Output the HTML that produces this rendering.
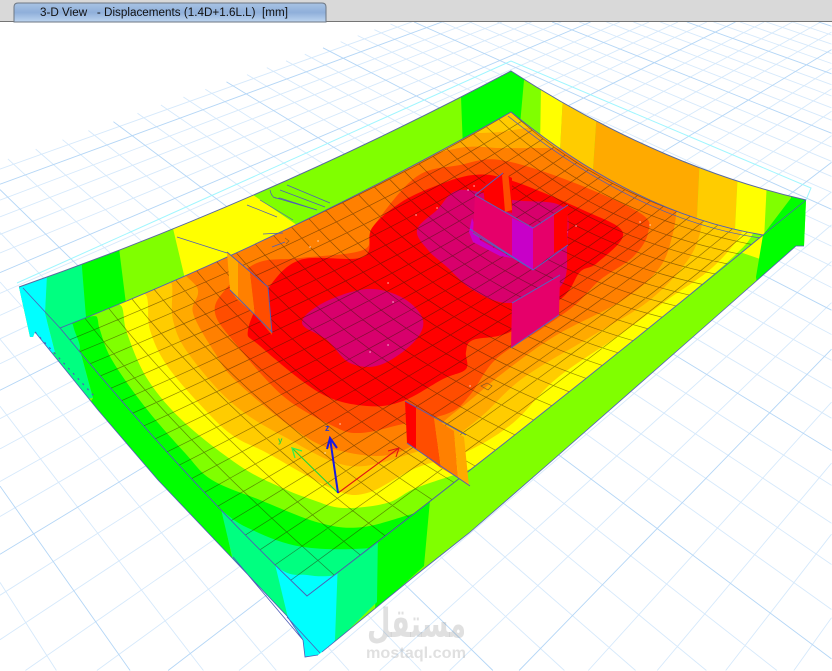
<!DOCTYPE html>
<html>
<head>
<meta charset="utf-8">
<style>
html,body{margin:0;padding:0;background:#fff;width:832px;height:671px;overflow:hidden}
svg{display:block}
</style>
</head>
<body>
<svg xmlns="http://www.w3.org/2000/svg" width="832" height="671" viewBox="0 0 832 671">
<defs>
<linearGradient id="tabg" x1="0" y1="0" x2="0" y2="1">
<stop offset="0" stop-color="#a8c3e4"/>
<stop offset=".5" stop-color="#8fafda"/>
<stop offset="1" stop-color="#bdd5f0"/>
</linearGradient>
<clipPath id="sil"><path d="M19 287Q265 201 511 71Q658.5 166.5 806 200L804 246L796 246L694 336L554 459L469 533L416 575L322 652L318 655L305 657L303 640L287 616L233 559L158 480L98 410L35 332L33 337L30 337Z"/></clipPath>
<clipPath id="slabClip"><path d="M60 328Q284.5 240 511 112Q637 214.5 763 235Q535 422.5 307 596Q183.5 478 60 328Z"/></clipPath>
<clipPath id="view"><rect x="0" y="22" width="832" height="649"/></clipPath>
</defs>
<rect width="832" height="671" fill="#fff"/>
<g clip-path="url(#view)" fill="none">
<path id="gminor" stroke="#d6e9fb" stroke-width=".9"/>
<path id="gmajor" stroke="#b4d6f6" stroke-width=".9"/>
<path d="M17 283L511 61L811 188L806 200" stroke="#9ff6ff" stroke-width="1"/>
</g>

<g clip-path="url(#sil)">
<rect x="0" y="40" width="832" height="631" fill="#80ff00"/>
<polygon fill="#00ffff" points="10,270 47,270 45,313 60,330 19,300"/>
<polygon fill="#00ff80" points="47,270 81,255 87,325 60,335 45,313"/>
<polygon fill="#00ff00" points="81,255 118,240 128,320 87,330"/>
<polygon fill="#ffff00" points="171,220 240,186 310,234 190,300"/>
<polygon fill="#00ff00" points="460,70 515,55 524,80 520,125 463,150"/>
<polygon fill="#ffff00" points="541,85 563,95 559,170 540,150"/>
<polygon fill="#ffcc00" points="563,95 597,110 591,200 559,170"/>
<polygon fill="#ffaa00" points="597,110 700,155 696,240 591,200"/>
<polygon fill="#ffcc00" points="700,155 738,170 734,250 696,240"/>
<polygon fill="#ffff00" points="738,170 767,180 763,260 734,250"/>
<polygon fill="#00ff00" points="791,190 815,190 815,260 757,285 756,277 763,235 791,198"/>
<polygon fill="#00ff00" points="430,500 424,566 375,610 378,530"/>
<polygon fill="#00ff80" points="378,530 377,602 333,645 338,560"/>
<polygon fill="#00ffff" points="338,560 335,640 320,665 295,665 287,616 274,564 300,580"/>
<polygon fill="#00ffff" points="10,280 47,275 45,313 55,352 40,355 25,340"/>
<polygon fill="#00ff80" points="45,313 60,328 80,350 93,398 70,400 40,355 55,352"/>
<polygon fill="#00ff00" points="80,350 220,500 233,562 140,480 80,420 93,398"/>
<polygon fill="#00ff80" points="220,505 274,560 288,618 233,560"/>
</g>

<g clip-path="url(#slabClip)"><g id="contours"></g><path id="mesh" fill="none" stroke="#2e1c00" stroke-opacity=".5" stroke-width=".7"/></g>

<g fill="none" stroke="#4f5eb8" stroke-width="1">
<path d="M19 287Q265 201 511 71Q658.5 166.5 806 200" stroke="#56689f"/>
<path d="M60 328Q284.5 240 511 112Q637 214.5 763 235Q535 422.5 307 596Q183.5 478 60 328Z" stroke-width=".9"/>
<path d="M508 116Q637 220 760 238" stroke-width=".7"/>
<path d="M23 288L60 328M763 235L806 200M804 246L796 246L694 336L554 459L469 533L416 575L322 652" stroke-width=".8"/>
<path d="M35 332L98 410L158 480L233 559L287 616L303 640M287 617L320 653M233 557L303 640M303 640L305 657L318 655" stroke-width=".8"/>
<path d="M35 332L95 397" stroke-width="1.2" stroke-dasharray="2 5"/>
<path d="M270 190Q272 200 280 198L317 210M287 185L330 203M280 190L325 207M273 197L317 210M260 200L293 220M247 205L277 217M177 237L227 253M263 234L283 233M272 247L285 242" stroke-width=".7"/>
<path d="M481 386l6 -3l5 3l-4 4zM285 238l4 3l-3 3" stroke="#8a5a20" stroke-width=".7"/>
</g>
<path d="M310 247h.1M318 241h.1M388 283h.1M416 215h.1M437 208h.1M468 190h.1M474 186h.1M567 232h.1M576 226h.1M640 222h.1M650 225h.1M393 302h.1M388 345h.1M370 352h.1M325 453h.1M340 424h.1M470 386h.1" stroke="#fff" stroke-width="1.2" stroke-linecap="round" fill="none"/>

<!-- inner wall left -->
<polygon fill="#ffaa00" points="227,252 238,262 238,300 230,290"/>
<polygon fill="#ff8000" points="238,262 250,272 255,315 238,300"/>
<polygon fill="#ff4d00" points="250,272 268,287 272,335 255,315"/>
<path d="M227 252L268 287L272 333M230 290L272 332" fill="none" stroke="#4f5eb8" stroke-width=".9"/>

<!-- box walls -->
<polygon fill="#c800c8" points="472,218 480,240 512,258 500,256 473,242 469,232"/>
<polygon fill="#ff0000" points="483,185 503,173 512,178 512,213 485,205"/>
<polygon fill="#ff4d00" points="502,175 508,171 512,210 505,212"/>
<polygon fill="#e6006a" points="475,195 533,228 533,270 473,233"/>
<polygon fill="#c800c8" points="512,218 533,228 533,270 512,257"/>
<polygon fill="#e6006a" points="533,228 554,213 554,253 533,270"/>
<polygon fill="#ff0000" points="554,213 568,205 567,245 554,253"/>
<polygon fill="#e6006a" points="512,303 560,275 559,315 511,348"/>
<path d="M475 195L533 228L568 205M473 233L533 270L568 245M475 195L503 173M512 303L560 275M511 348L559 315M470 229L530 268" fill="none" stroke="#4b6cc4" stroke-width=".9"/>

<!-- near wall -->
<polygon fill="#ff0000" points="405,401 416,407 416,449 407,443"/>
<polygon fill="#ff4d00" points="416,407 434,418 441,468 416,449"/>
<polygon fill="#ff8000" points="434,418 454,431 458,478 441,468"/>
<polygon fill="#ffaa00" points="454,431 464,437 469,486 458,478"/>
<path d="M405 401L466 435M407 443L470 486" fill="none" stroke="#4f5eb8" stroke-width=".9"/>

<!-- axes -->
<g fill="none">
<path d="M338 493L292 448" stroke="#14d63c" stroke-width="1"/>
<path d="M302 451L292 448L295 458" stroke="#30f050" stroke-width="1.3"/>
<path d="M338 493L399 448M388 451L399 448L396 457" stroke="#e01414" stroke-width="1.1"/>
<path d="M338 493L330 438M327 449L330 438L337 448" stroke="#1a1ae0" stroke-width="2"/>
</g>
<text x="325" y="431" font-family="Liberation Sans, sans-serif" font-size="9" font-weight="bold" fill="#2a3ad0">z</text>
<text x="278" y="443" font-family="Liberation Sans, sans-serif" font-size="8" font-weight="bold" fill="#30d040">y</text>

<!-- watermark -->
<text x="367" y="637" font-family="DejaVu Sans, sans-serif" font-size="40" font-weight="bold" fill="#909090" fill-opacity=".28" textLength="99" lengthAdjust="spacingAndGlyphs" direction="rtl" text-anchor="end">مستقل</text>
<text x="366" y="658" font-family="Liberation Sans, sans-serif" font-size="16" font-weight="bold" fill="#909090" fill-opacity=".28" textLength="100" lengthAdjust="spacingAndGlyphs">mostaql.com</text>

<!-- tab bar -->
<rect x="0" y="0" width="832" height="21" fill="#d9d9d9"/>
<rect x="0" y="21" width="832" height="1" fill="#757575"/>
<path d="M14 22V7Q14 3 18 3H322Q326 3 326 7V22Z" fill="url(#tabg)" stroke="#6d7783" stroke-width="1"/>
<text x="40" y="16" font-family="Liberation Sans, sans-serif" font-size="11.5" fill="#111" xml:space="preserve" textLength="248" lengthAdjust="spacingAndGlyphs">3-D View   - Displacements (1.4D+1.6L.L)  [mm]</text>
</svg>
<script>
(function(){
var A=[60,328],B=[511,112],C=[763,235],D=[307,596];
var dx1=B[0]-C[0],dx2=D[0]-C[0],sx=A[0]-B[0]+C[0]-D[0],dy1=B[1]-C[1],dy2=D[1]-C[1],sy=A[1]-B[1]+C[1]-D[1];
var den=dx1*dy2-dx2*dy1,g=(sx*dy2-dx2*sy)/den,h=(dx1*sy-sx*dy1)/den;
var a=B[0]-A[0]+g*B[0],b=D[0]-A[0]+h*D[0],c=A[0],d=B[1]-A[1]+g*B[1],e=D[1]-A[1]+h*D[1],f=A[1];
function P(s,t){var w=g*s+h*t+1;return[(a*s+b*t+c)/w,(d*s+e*t+f)/w];}
function fm(p){return p[0].toFixed(1)+' '+p[1].toFixed(1);}
function seg(p,q){
 var t1=0,t2=1,ddx=q[0]-p[0],ddy=q[1]-p[1];
 var ps=[-ddx,ddx,-ddy,ddy],qs=[p[0],831.5-p[0],p[1]-22,670.5-p[1]];
 for(var i=0;i<4;i++){
  if(ps[i]===0){if(qs[i]<0)return '';}
  else{var r=qs[i]/ps[i];if(ps[i]<0){if(r>t2)return '';if(r>t1)t1=r;}else{if(r<t1)return '';if(r<t2)t2=r;}}
 }
 return 'M'+fm([p[0]+t1*ddx,p[1]+t1*ddy])+'L'+fm([p[0]+t2*ddx,p[1]+t2*ddy]);
}
var t0=-.86,minor='',major='',i,v,ws=.054,wt=.084;
for(i=-30;i<=110;i++){
 v=-.182+i*ws;
 var tm=Math.min(3.9,(1+g*v-.03)/(-h));
 var l=seg(P(v,t0),P(v,tm));
 if(((i%5)+5)%5===0)major+=l;else minor+=l;
}
for(i=-11;i<=45;i++){
 v=.107+i*wt;
 var sm=Math.max(-1.6,(.03-1-h*v)/g);
 var l2=seg(P(sm,v),P(6,v));
 if(((i%5)+5)%5===0)major+=l2;else minor+=l2;
}
document.getElementById('gminor').setAttribute('d',minor);
document.getElementById('gmajor').setAttribute('d',major);

function Y(s,t){return 4*s*(1-s)*(10*(1-t)+4*t)+4*t*(1-t)*(10*(1-s)+22*s)+16*s*(1-s)*t*(1-t)*8;}
function Q(s,t){var p=P(s,t);return[p[0],p[1]+Y(s,t)];}
var m='',ns=26,nt=20,j,k;
for(j=0;j<=ns;j++){var s=j/ns;m+='M'+fm(Q(s,0));for(k=1;k<=24;k++)m+='L'+fm(Q(s,k/24));}
for(j=0;j<=nt;j++){var t=j/nt;m+='M'+fm(Q(0,t));for(k=1;k<=24;k++)m+='L'+fm(Q(k/24,t));}
document.getElementById('mesh').setAttribute('d',m);

function cr(p){var n=p.length,o='M'+p[0][0]+' '+p[0][1];
 for(var i=0;i<n;i++){var p0=p[(i-1+n)%n],p1=p[i],p2=p[(i+1)%n],p3=p[(i+2)%n];
  o+='C'+(p1[0]+(p2[0]-p0[0])/6).toFixed(1)+' '+(p1[1]+(p2[1]-p0[1])/6).toFixed(1)+' '+(p2[0]-(p3[0]-p1[0])/6).toFixed(1)+' '+(p2[1]-(p3[1]-p1[1])/6).toFixed(1)+' '+p2[0]+' '+p2[1];}
 return o+'Z';}
var L=[
['#00ff80',[[190,490],[274,565],[307,575],[338,575],[380,565],[460,520],[800,230],[511,50],[30,300]]],
['#00ff00',[[205,497],[220,509],[248,528],[303,547],[380,547],[430,530],[800,230],[511,50],[70,295],[73,325],[80,348],[72,362],[125,432]]],
['#80ff00',[[88,295],[97,317],[100,330],[112,360],[145,407],[185,453],[212,480],[260,500],[320,523],[363,527],[420,512],[445,510],[800,230],[511,50]]],
['#ffff00',[[110,285],[122,307],[127,333],[148,380],[185,423],[240,466],[280,487],[313,500],[343,508],[387,503],[416,488],[468,470],[500,455],[576,391],[640,336],[683,300],[733,257],[753,233],[755,205],[680,150],[511,85],[300,180]]],
['#ffcc00',[[135,270],[147,297],[150,330],[168,367],[208,413],[235,437],[267,453],[333,489],[367,493],[416,468],[466,452],[513,423],[556,379],[618,336],[667,300],[713,267],[743,230],[745,200],[680,160],[511,90],[300,185]]],
['#ffaa00',[[165,265],[172,285],[173,320],[188,353],[232,403],[283,436],[350,466],[416,452],[452,438],[483,415],[523,378],[592,336],[650,300],[690,257],[703,220],[705,195],[640,165],[580,130],[557,143],[537,128],[500,132],[469,133],[440,130],[300,190]]],
['#ff8000',[[185,255],[198,290],[193,313],[215,353],[235,380],[290,426],[333,449],[397,453],[459,409],[503,373],[555,336],[623,300],[660,267],[673,233],[677,207],[680,190],[620,160],[575,135],[565,148],[550,148],[500,148],[466,147],[416,156],[400,145],[300,200]]],
['#ff4d00',[[500,160],[567,180],[640,213],[648,233],[633,257],[600,280],[575,305],[540,330],[496,359],[470,395],[449,413],[403,424],[360,433],[333,426],[283,396],[235,343],[215,313],[225,290],[257,263],[300,258],[363,250],[373,227],[416,177],[460,165]]],
['#ff0000',[[473,175],[510,180],[583,210],[623,233],[597,263],[580,272],[562,298],[510,332],[473,340],[466,352],[466,369],[443,379],[403,401],[367,406],[320,393],[260,346],[248,330],[267,290],[300,260],[363,257],[372,228],[400,203],[433,187]]],
['#d8006c',[[302,323],[323,303],[367,289],[403,298],[423,320],[413,343],[380,365],[350,363],[327,340]]],
['#d8006c',[[417,230],[437,210],[460,190],[513,200],[563,207],[567,247],[560,287],[510,303],[473,290],[447,267],[428,250]]]
];
var out='<rect x="0" y="50" width="832" height="600" fill="#00ffff"/>';
for(i=0;i<L.length;i++)out+='<path fill="'+L[i][0]+'" d="'+cr(L[i][1])+'"/>';
document.getElementById('contours').innerHTML=out;
})();
</script>
</body>
</html>
